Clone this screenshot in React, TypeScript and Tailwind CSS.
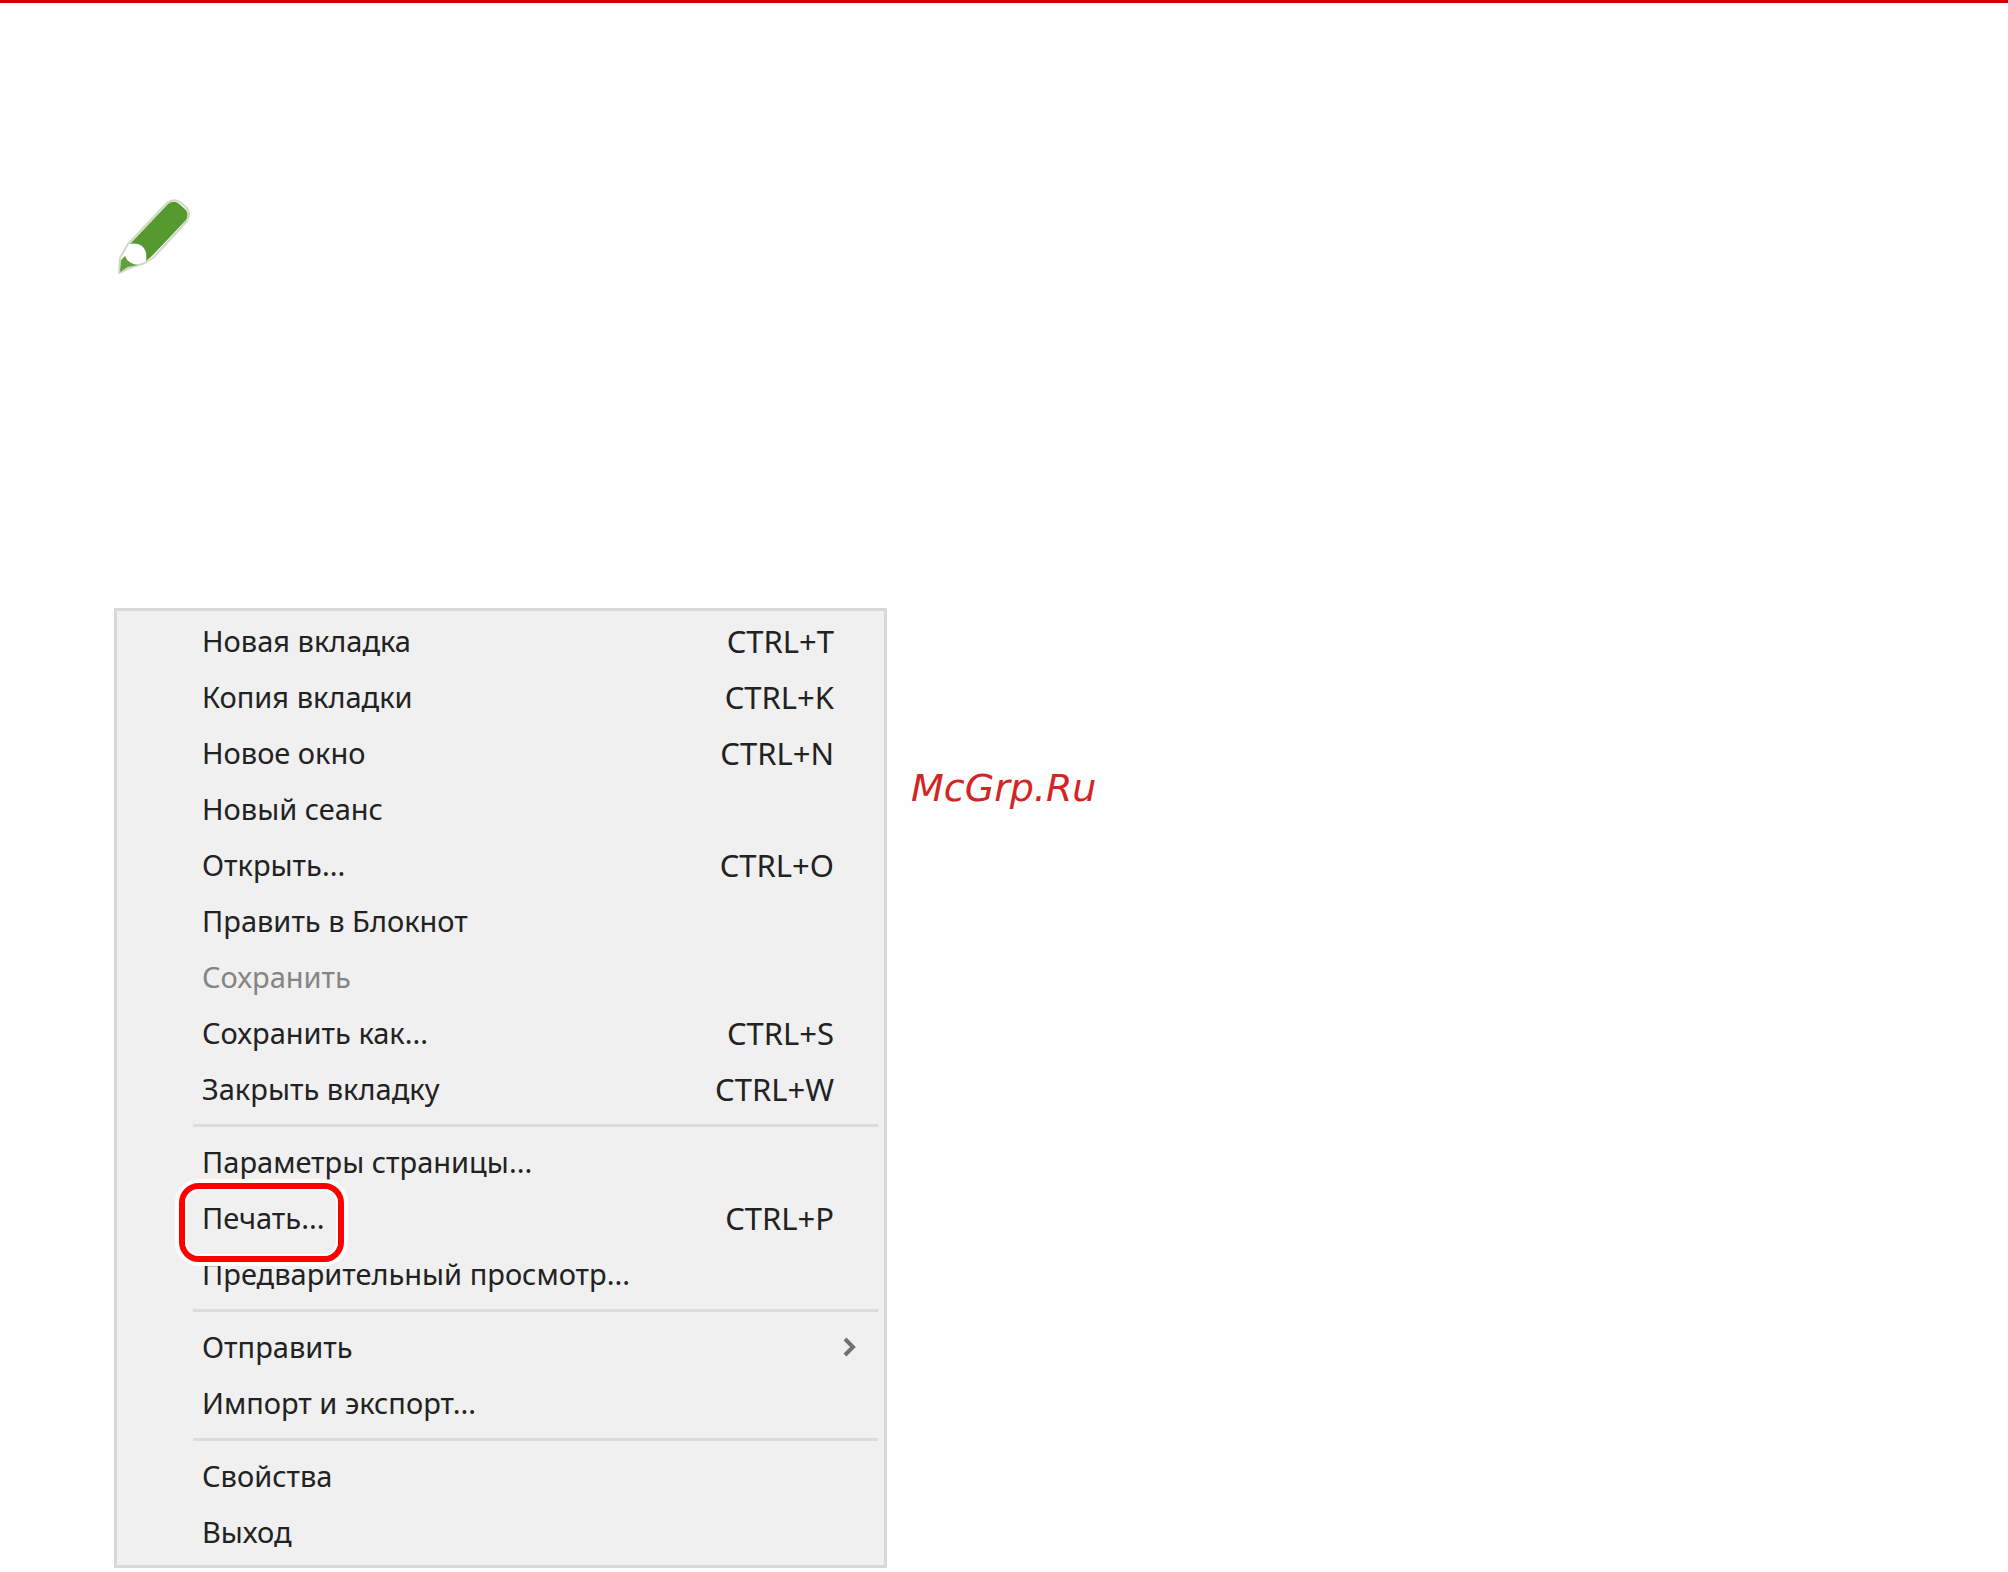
type Item = { label: string; keys?: string; disabled?: boolean; submenu?: boolean; marked?: boolean };

const groups: Item[][] = [
  [
    { label: "Новая вкладка", keys: "CTRL+T" },
    { label: "Копия вкладки", keys: "CTRL+K" },
    { label: "Новое окно", keys: "CTRL+N" },
    { label: "Новый сеанс" },
    { label: "Открыть...", keys: "CTRL+O" },
    { label: "Править в Блокнот" },
    { label: "Сохранить", disabled: true },
    { label: "Сохранить как...", keys: "CTRL+S" },
    { label: "Закрыть вкладку", keys: "CTRL+W" },
  ],
  [
    { label: "Параметры страницы..." },
    { label: "Печать...", keys: "CTRL+P", marked: true },
    { label: "Предварительный просмотр..." },
  ],
  [{ label: "Отправить", submenu: true }, { label: "Импорт и экспорт..." }],
  [{ label: "Свойства" }, { label: "Выход" }],
];

function Pencil() {
  return (
    <svg className="h-20 w-20" viewBox="0 0 80 80" fill="none" aria-hidden="true">
      <path
        d="M5 75 L6 60 L14 46 L53 5 Q59 0 66 4 L73 10 Q77 17 73 23 L40 59 L31 65 L18 69 Z"
        fill="#ffffff"
        stroke="#d0d9c8"
        strokeWidth="2"
        strokeLinejoin="round"
      />
      <path d="M16 46 L54 6 Q59 2 64 5 L72 12 Q75 17 72 22 L38 58 L32 63 Q34 49 24 46 Q19 45 16 46 Z" fill="#55992f" />
      <path d="M6 74 L7 62 L11 58 Q14 66 24 67 L14 69 Z" fill="#62a03d" />
    </svg>
  );
}

function MenuRow({ item }: { item: Item }) {
  return (
    <li role="none" className="relative">
      <button
        type="button"
        role="menuitem"
        disabled={item.disabled}
        className="flex h-14 w-full items-center justify-between pr-[50px] pl-[85px] text-left text-[#222222] disabled:text-[#858585]"
      >
        <span>{item.label}</span>
        {item.keys && <span className="text-[31px]">{item.keys}</span>}
        {item.submenu && (
          <svg className="-mr-6 h-5 w-4" viewBox="0 0 16 20" fill="none" aria-hidden="true">
            <path d="M3 2 L11 10 L3 18" stroke="#707070" strokeWidth="4" />
          </svg>
        )}
      </button>
      {item.marked && (
        <span className="pointer-events-none absolute -top-[11px] left-[58px] z-10 h-[87px] w-[173px] rounded-[24px] border-4 border-white">
          <span className="block h-full rounded-[20px] border-[6px] border-[#ff0000]">
            <span className="block h-full rounded-[14px] border-2 border-white" />
          </span>
        </span>
      )}
    </li>
  );
}

export default function App() {
  return (
    <main className="min-h-screen border-t-[3px] border-[#d00000] bg-white pb-1">
      <div className="px-[114px] pt-[195px]">
        <div className="h-[410px]">
          <Pencil />
        </div>
        <div className="flex items-start gap-6">
          <nav
            aria-label="Файл"
            className="w-full max-w-[773px] border-[3px] border-[#d8d8d8] bg-[#f0f0f0] pt-0.5 pb-[5px] font-['Noto_Sans',sans-serif] text-[29px] leading-10"
          >
            {groups.map((group, i) => (
              <ul key={i} role="menu">
                {i > 0 && (
                  <li role="separator" className="flex h-[17px] items-center pr-[6px] pl-[76px]">
                    <span className="h-[3px] w-full bg-[#dcdcdc]" />
                  </li>
                )}
                {group.map((item) => (
                  <MenuRow key={item.label} item={item} />
                ))}
              </ul>
            ))}
          </nav>
          <p className="pt-[156px] font-['DejaVu_Sans',sans-serif] text-[38px] leading-12 text-[#d42424] italic">
            McGrp.Ru
          </p>
        </div>
      </div>
    </main>
  );
}
